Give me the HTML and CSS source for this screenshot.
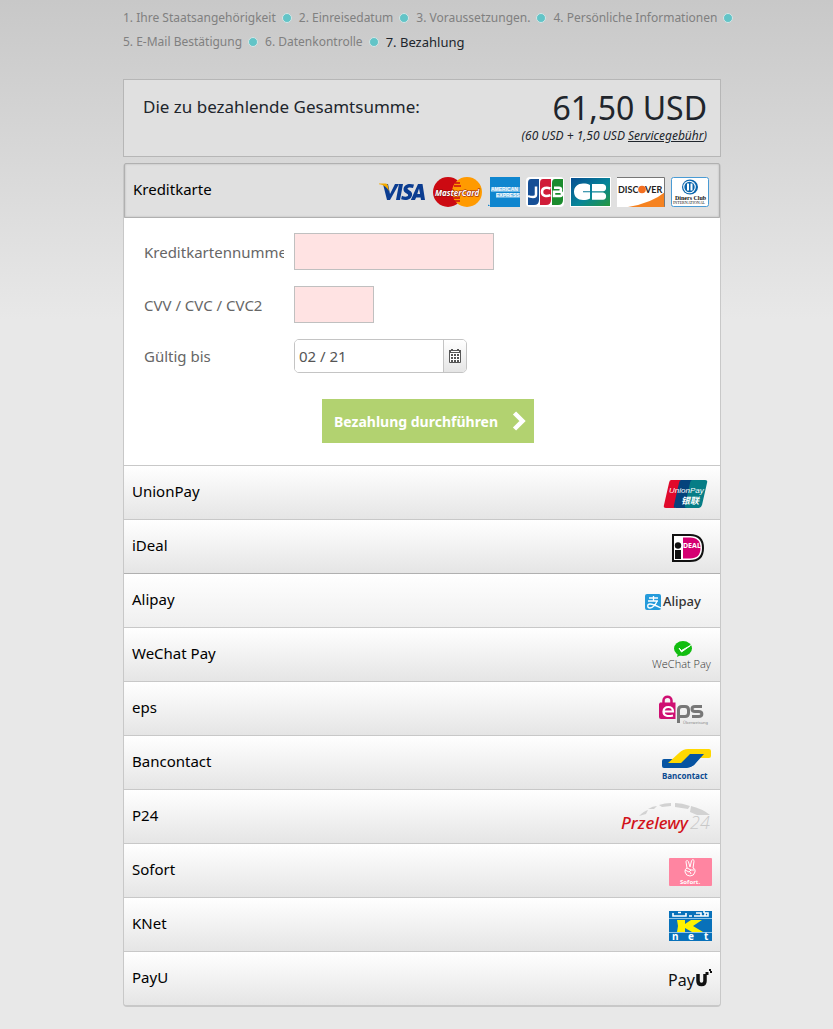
FILE: index.html
```html
<!DOCTYPE html>
<html lang="de">
<head>
<meta charset="utf-8">
<meta name="viewport" content="width=device-width, initial-scale=1">
<title>Bezahlung</title>
<link rel="stylesheet" href="styles.css">
</head>
<body>
<main class="page">
  <ol class="steps">
    <li class="step">1. Ihre Staatsangehörigkeit</li>
    <li class="step">2. Einreisedatum</li>
    <li class="step">3. Voraussetzungen.</li>
    <li class="step">4. Persönliche Informationen</li>
    <li class="step">5. E-Mail Bestätigung</li>
    <li class="step">6. Datenkontrolle</li>
    <li class="step step-current" aria-current="step">7. Bezahlung</li>
  </ol>

  <section class="total">
    <p class="total-label">Die zu bezahlende Gesamtsumme:</p>
    <div class="total-sum">
      <p class="total-amount">61,50 USD</p>
      <p class="total-note">(60 USD + 1,50 USD <a href="#fee" class="fee-link">Servicegebühr</a>)</p>
    </div>
  </section>

  <div class="methods">
    <button type="button" class="method method-open" aria-expanded="true">
      <span class="method-name">Kreditkarte</span>
      <span class="cards">
        <svg width="48" height="30" viewBox="0 0 48 30" aria-label="Visa">
          <g fill="#0b3d91"><path d="M4 7h5l2 10 5-10h4l-9 16H8z"/><path d="M20 7h4l-3 16h-4z"/><path d="M35 7.600l-1 3.500c-2-1-5-1-5.500.3-.3 1.600 5 2 4.600 6.300-.5 5-6 6.200-11 4.600l.8-3.600c2.500 1.400 6 1.300 6.200-.5.2-1.700-5-2.200-4.600-6.200.5-5 6-6 10.500-4.400z"/><path d="M39 7h4.500L46 23h-4l-.4-2.600h-4.500L36 23h-4.200zm1 4.500L38.300 17h2.800z"/></g>
          <path d="M0 6.500h6.500c1.600 0 2.300 1 2.500 2.400L10 14C7.800 10.500 5 7.800 0 7.300z" fill="#f2a900"/>
        </svg>
        <svg width="49" height="30" viewBox="0 0 49 30" aria-label="MasterCard">
          <circle cx="15" cy="15" r="15" fill="#cc0a12"/><circle cx="34" cy="15" r="15" fill="#ff9a00"/>
          <path d="M22 6h5M21 9h7M20 21h7M21 24h6" stroke="#cc0a12" stroke-width="1.500"/>
          <text x="2" y="19" font-size="8" class="logo logo-bold logo-italic logo-outlined" fill="#fff">MasterCard</text>
        </svg>
        <svg width="32" height="30" viewBox="0 0 32 30" aria-label="American Express">
          <rect x="2" width="30" height="30" fill="#0f86cf"/><path d="M-2 29l1-2 2 1 1 1z" fill="#0f86cf"/>
          <rect x="3" y="10" width="29" height="5" fill="#6ab5e3"/><rect x="8" y="16" width="24" height="5" fill="#6ab5e3"/>
          <text x="3" y="14" font-size="5" class="logo logo-arial logo-bold" fill="#fff">AMERICAN</text>
          <text x="8" y="20" font-size="5" class="logo logo-arial logo-bold" fill="#fff">EXPRESS</text>
        </svg>
        <svg width="38" height="30" viewBox="0 0 38 30" aria-label="JCB">
          <rect width="38" height="30" rx="4" fill="#fff"/>
          <path d="M5 2h8v21q0 5-5 5H2V6q0-4 3-4z" fill="#164f96"/><path d="M17 2h8v21q0 5-5 5h-6V6q0-4 3-4z" fill="#d01c38"/><path d="M29 2h8v21q0 5-5 5h-6V6q0-4 3-4z" fill="#1c8b2e"/>
          <g fill="none" stroke="#fff" stroke-width="2.500"><path d="M10 9.500v8q0 2.500-3 2.500-3 0-5-1"/><path d="M24.500 11.500c-4-1.500-8.500-.8-8.500 3.400s4.500 5 8.500 3.300"/><path d="M28 10.700h5q2 0 2 2t-2 2h-5m0 0h6q2 0 2 2.300t-2 2h-6z"/></g>
        </svg>
        <svg width="41" height="30" viewBox="0 0 41 30" aria-label="CB">
          <defs><linearGradient id="cb" x1="0" y1="0" x2="1" y2="1"><stop offset="0" stop-color="#064d91"/><stop offset=".55" stop-color="#078599"/><stop offset="1" stop-color="#26983d"/></linearGradient></defs>
          <rect width="41" height="30" fill="#fff"/><rect x="1" y="1" width="39" height="28" fill="url(#cb)"/>
          <path d="M20 14.300V8c-2-1.300-4-1.500-7-1.500C8 6.500 4 9.600 4 14.800S8 23 13 23c3 0 5-.3 7-1.500v-6.200h-7v-1zM22 7h11a3.700 3.700 0 010 7.300H22zM22 15.500h11a3.700 3.700 0 010 7.300H22z" fill="#fff"/>
        </svg>
        <svg width="48" height="30" viewBox="0 0 48 30" aria-label="Discover">
          <rect width="48" height="30" fill="#fff"/><path d="M48 15v15H11Q35 26 48 15z" fill="#f58220"/><path d="M0 .5h47.500v29" fill="none" stroke="#777"/>
          <text x="1" y="15.500" font-size="9" class="logo logo-bold logo-lato" fill="#222">DISC</text><circle cx="25" cy="12.500" r="3.800" fill="#f36f21"/><text x="28" y="15.500" font-size="9" class="logo logo-bold logo-lato" fill="#222">VER</text>
        </svg>
        <svg width="38" height="30" viewBox="0 0 38 30" aria-label="Diners Club International">
          <rect x=".5" y=".5" width="37" height="29" rx="2" fill="#fff" stroke="#4a9bd4"/>
          <ellipse cx="19" cy="10" rx="8" ry="7.500" fill="#0a66ad"/><circle cx="18.500" cy="10" r="6.300" fill="#fff"/><circle cx="18.500" cy="10" r="5.200" fill="#0a66ad"/><path d="M17 6.500v7M20.500 6.500v7" stroke="#fff" stroke-width="2"/>
          <text x="4" y="22.500" font-size="6" class="logo logo-serif logo-bold" fill="#111">Diners Club</text>
          <text x="2" y="27" font-size="4" class="logo logo-serif" fill="#111">INTERNATIONAL</text>
        </svg>
      </span>
    </button>

    <form class="panel">
      <div class="field">
        <label class="field-label" for="number">Kreditkartennummer</label>
        <input class="text-box" id="number" type="text" inputmode="numeric">
      </div>
      <div class="field">
        <label class="field-label" for="cvv">CVV / CVC / CVC2</label>
        <input class="text-box text-box-short" id="cvv" type="text" inputmode="numeric">
      </div>
      <div class="field">
        <label class="field-label" for="valid">Gültig bis</label>
        <div class="date">
          <input class="date-box" id="valid" type="text" value="02 / 21">
          <button type="button" class="date-button" aria-label="Kalender">
            <svg width="12" height="14" viewBox="0 0 12 14"><path d="M.5 2.500h11v11H.5z" fill="#fff" stroke="#555"/><path d="M0 1h2V0h2v1h4V0h2v1h2v3H0z" fill="#555"/><path d="M2 2.500h8" stroke="#fff"/><path d="M2 6h8M2 9h8M2 12h8" stroke="#555" stroke-width="2" stroke-dasharray="2 1"/></svg>
          </button>
        </div>
      </div>
      <div class="actions">
        <button type="submit" class="pay">Bezahlung durchführen
          <svg width="14" height="20" viewBox="0 0 14 20"><path d="M2.500 2l8 8-8 8" fill="none" stroke="#fff" stroke-width="4.500"/></svg>
        </button>
      </div>
    </form>

    <button type="button" class="method"><span class="method-name">UnionPay</span>
      <svg width="100" height="53" viewBox="0 0 100 53" aria-hidden="true">
        <path d="M59 14h10l-6 28h-9q-3 0-2-3l5-22q.5-3 2-3z" fill="#e0092b"/><path d="M69 14h13l-6 28H64q-3 0-2-3l5-22q.5-3 2-3z" fill="#05437c"/><path d="M80 14h13q3 0 2 3l-5 22q-1 3-3 3H75q-3 0-2-3l5-22q.5-3 2-3z" fill="#067d86"/>
        <text x="57" y="27" font-size="8" class="logo logo-italic logo-arial" fill="#fff">UnionPay</text>
        <text x="69" y="38" font-size="9" class="logo logo-bold logo-italic logo-cjk" fill="#fff">银联</text>
      </svg></button>
    <button type="button" class="method"><span class="method-name">iDeal</span>
      <svg width="100" height="53" viewBox="0 0 100 53" aria-hidden="true">
        <path d="M61 15h17c9 0 13 5 13 13s-4 13-13 13H61z" fill="#fff" stroke="#111" stroke-width="2"/><path d="M71 17.500h7c7 0 10.500 3.500 10.500 10.500S85 38.500 78 38.500h-7z" fill="#d50072"/><circle cx="66" cy="25.500" r="3.200" fill="#111"/><rect x="63" y="30" width="6" height="9" fill="#111"/><text x="71" y="28" font-size="7" class="logo logo-bold" fill="#fff">DEAL</text>
      </svg></button>
    <button type="button" class="method method-focus"><span class="method-name">Alipay</span>
      <svg width="100" height="53" viewBox="0 0 100 53" aria-hidden="true">
        <rect x="33" y="20" width="16" height="16" rx="2" fill="#259bdb"/><path d="M37 24h9M41.500 22v5M36 27h10M45 27c-1 3-4 7-7 7s-3-4 0-4 7 2 11 4" fill="none" stroke="#fff" stroke-width="1.300"/><text x="51" y="32" font-size="13" class="logo logo-medium" fill="#333">Alipay</text>
      </svg></button>
    <button type="button" class="method"><span class="method-name">WeChat Pay</span>
      <svg width="100" height="53" viewBox="0 0 100 53" aria-hidden="true">
        <ellipse cx="71" cy="20.500" rx="9" ry="7.500" fill="#12bd10"/><path d="M66 25l-1 4 4-2z" fill="#12bd10"/><path d="M67 20l2.500 2.500 9-5-9 6.500z" fill="#fff" stroke="#fff"/><text x="40" y="40" font-size="11" class="logo logo-light" fill="#333">WeChat Pay</text>
      </svg></button>
    <button type="button" class="method"><span class="method-name">eps</span>
      <svg width="100" height="53" viewBox="0 0 100 53" aria-hidden="true">
        <path d="M51.500 22v-3.500c0-5 8-5 8 0V22" fill="none" stroke="#cf0f72" stroke-width="2.500"/><path d="M48 20.500h15.500V37H49q-2 0-2-2V22z" fill="#cf0f72"/><path d="M52 29.500h9c0-6-9-6-9.500 0 0 5 5 5 9.500 4" fill="none" stroke="#fff" stroke-width="2.200"/>
        <g fill="none" stroke="#777" stroke-width="3"><path d="M66.500 41V28q0-3.500 3.500-3.500h3q3.500 0 3.500 3.500v3q0 3.500-3.500 3.500h-6"/><path d="M90 24.500h-7c-4 0-4 5 0 5h3.500c4.500 0 4.500 5 0 5H80"/></g>
        <text x="71" y="42" font-size="4" class="logo" fill="#888">Überweisung</text>
      </svg></button>
    <button type="button" class="method"><span class="method-name">Bancontact</span>
      <svg width="100" height="53" viewBox="0 0 100 53" aria-hidden="true">
        <path d="M52 23h14l16-3h7l-7 9q-4 3-8 3H52q-2 0-2-2v-5q0-2 2-2z" fill="#0754a2"/><path d="M56 27l11-10q4-4 9-4h21q2 0 2 2v5q0 2-2 2H83l-9 5z" fill="#ffd800"/><path d="M69 27l9-9h14L82 29q-4 3-8 3H60l2-5z" fill="#0754a2"/>
        <text x="50" y="43" font-size="8" class="logo logo-bold" fill="#0a4a91">Bancontact</text>
      </svg></button>
    <button type="button" class="method"><span class="method-name">P24</span>
      <svg width="100" height="53" viewBox="0 0 100 53" aria-hidden="true">
        <g fill="#d2d2d2"><path d="M27 26q5-5 9-6l-2 4zM36 19q5-3 9-3l-3 3zM47 15q6-2 12-2v3l-9 1zM63 13q7 0 15 3l-2 3-13-2zM79 16q12 3 19 9H85l-7-3z"/></g>
        <text x="9" y="39" font-size="17" class="logo logo-italic logo-medium" fill="#d2131b">Przelewy</text><text x="78" y="39" font-size="18" class="logo logo-italic logo-light" fill="#c8c8c8">24</text>
      </svg></button>
    <button type="button" class="method"><span class="method-name">Sofort</span>
      <svg width="100" height="53" viewBox="0 0 100 53" aria-hidden="true">
        <rect x="57" y="14" width="43" height="28" rx="1" fill="#ff85a1"/><path d="M75 24l-1-6c0-2 2-2 2.500 0l1.500 5 1.500-6c.5-2 3-1.500 2.500.5L81 24q3 1 2 4-1 4-5 4t-5-4q-.5-3 2-4zm0 0l4 2-2 2-4-2m6 0h3m-4 2l1 2" fill="none" stroke="#fff"/><text x="68" y="40" font-size="6" class="logo logo-bold" fill="#fff">Sofort.</text>
      </svg></button>
    <button type="button" class="method"><span class="method-name">KNet</span>
      <svg width="100" height="53" viewBox="0 0 100 53" aria-hidden="true">
        <rect x="57" y="13" width="43" height="30" fill="#0871ba"/><path d="M57 20.500h43M57 34.500h43" stroke="#8fc4e8"/><path d="M65 22h8v4l6-4h11l-9 6 10 6H80l-7-4v4h-8l1-6z" fill="#fff200"/>
        <path d="M61 15v3h13v-3M66 14.500h3M77 18h3M82 18h14v-3h-3v3M84 15h5v3M91 14h2" fill="none" stroke="#fff" stroke-width="1.600"/>
        <g font-size="10" class="logo logo-bold" fill="#fff"><text x="60" y="42">n</text><text x="76" y="42">e</text><text x="92" y="42">t</text></g>
      </svg></button>
    <button type="button" class="method"><span class="method-name">PayU</span>
      <svg width="100" height="53" viewBox="0 0 100 53" aria-hidden="true">
        <text x="56" y="34" font-size="16" class="logo" fill="#111">Pay</text><path d="M86 22v7q0 3.500 3.500 3.500t3.500-3.500v-7" fill="none" stroke="#111" stroke-width="3.500"/><path d="M93.500 20h3v3h-3zM97 17h2v2h-2zM98 19h2v2h-2z" fill="#111"/>
      </svg></button>
  </div>
</main>
</body>
</html>
```

FILE: styles.css
```css
* {
  box-sizing: border-box;
}

body {
  margin: 0;
  min-height: 100vh;
  background: #e8e8e8 linear-gradient(#c8c8c8, #e8e8e8) 0 0 / 100% 320px no-repeat;
  color: #20252c;
  font-family: "Noto Sans", "Open Sans", sans-serif;
  font-size: 15px;
}

p {
  margin: 0;
}

button,
input {
  font: inherit;
}

.page {
  padding: 6px 112px 22px 123px;
}

.steps {
  display: flex;
  flex-wrap: wrap;
  column-gap: 7px;
  margin: 0 -20px 25px 0;
  padding: 0;
  list-style: none;
  color: #808080;
  font-size: 12px;
  line-height: 24px;
}

.step {
  display: flex;
  align-items: center;
  gap: 6px;
  white-space: nowrap;
}

.step::after {
  content: "";
  width: 8px;
  height: 8px;
  border: 1px solid #d5e6e6;
  border-radius: 50%;
  background: #62c4c7;
}

.step-current {
  color: #20252c;
  font-size: 13px;
}

.step-current::after {
  display: none;
}

.total {
  display: flex;
  justify-content: space-between;
  margin-bottom: 6px;
  padding: 8px 13px 12px 19px;
  border: 1px solid #b6b6b6;
  background: #e0e0e0;
}

.total-label {
  padding-top: 7px;
  font-size: 17px;
  line-height: 24px;
}

.total-sum {
  text-align: right;
}

.total-amount {
  font-size: 32px;
  line-height: 40px;
}

.total-note {
  font-size: 12px;
  font-style: italic;
  line-height: 16px;
}

.fee-link {
  color: inherit;
}

.methods {
  border: solid #c8c8c8;
  border-width: 0 1px 2px;
  border-radius: 4px;
}

.method {
  display: flex;
  align-items: center;
  justify-content: space-between;
  width: 100%;
  height: 54px;
  padding: 0 8px;
  border: 0;
  border-top: 1px solid #c8c8c8;
  background: linear-gradient(#fff, #e5e5e5);
  color: #000;
  text-align: left;
}

.method-name {
  padding-bottom: 4px;
}

.method-focus {
  border-color: #b0b0b0;
  background: linear-gradient(#fff, #efefef);
}

.method-open {
  height: 55px;
  border: 1px solid #b0b0b0;
  border-radius: 2px 2px 0 0;
  background: #e0e0e0;
  box-shadow: inset 0 0 2px #b0b0b0;
}

.method:last-child {
  border-radius: 0 0 3px 3px;
}

.cards {
  display: flex;
  gap: 6px;
  padding: 3px 2px 0 0;
}

.panel {
  display: flex;
  flex-direction: column;
  gap: 16px;
  padding: 15px 20px 22px;
  background: #fff;
}

.field {
  display: flex;
  align-items: center;
  gap: 10px;
}

.field-label {
  width: 140px;
  overflow: hidden;
  color: #666;
  white-space: nowrap;
}

.text-box {
  width: 200px;
  height: 37px;
  padding: 0 5px;
  border: 1px solid #c0c0c0;
  background: #ffe3e3;
}

.text-box-short {
  width: 80px;
}

.date {
  display: flex;
  width: 173px;
  height: 34px;
  border: 1px solid #c4c4c4;
  border-radius: 5px;
  overflow: hidden;
}

.date-box {
  flex: 1;
  min-width: 0;
  padding: 0 4px;
  border: 0;
  background: #fff;
  color: #555;
}

.date-button {
  display: flex;
  align-items: center;
  justify-content: center;
  width: 23px;
  padding: 0;
  border: 0;
  border-left: 1px solid #c4c4c4;
  background: linear-gradient(#fff, #e5e5e5);
}

.actions {
  display: flex;
  justify-content: center;
  padding: 10px 0 0 12px;
}

.pay {
  display: flex;
  align-items: center;
  justify-content: space-between;
  width: 212px;
  height: 44px;
  padding: 0 8px 0 12px;
  border: 0;
  background: #b2d270;
  color: #fff;
  font-size: 14px;
  font-weight: 700;
  white-space: nowrap;
}

.logo {
  font-family: "Noto Sans", sans-serif;
}

.logo-bold {
  font-weight: 700;
}

.logo-medium {
  font-weight: 500;
}

.logo-light {
  font-family: "Open Sans", sans-serif;
  font-weight: 300;
}

.logo-italic {
  font-style: italic;
}

.logo-outlined {
  paint-order: stroke;
  stroke: #8e0a0a;
  stroke-width: 1px;
}

.logo-arial {
  font-family: "Liberation Sans", sans-serif;
}

.logo-lato {
  font-family: Lato, sans-serif;
}

.logo-serif {
  font-family: "Liberation Serif", serif;
}

.logo-cjk {
  font-family: "Noto Sans CJK SC", sans-serif;
}
```
